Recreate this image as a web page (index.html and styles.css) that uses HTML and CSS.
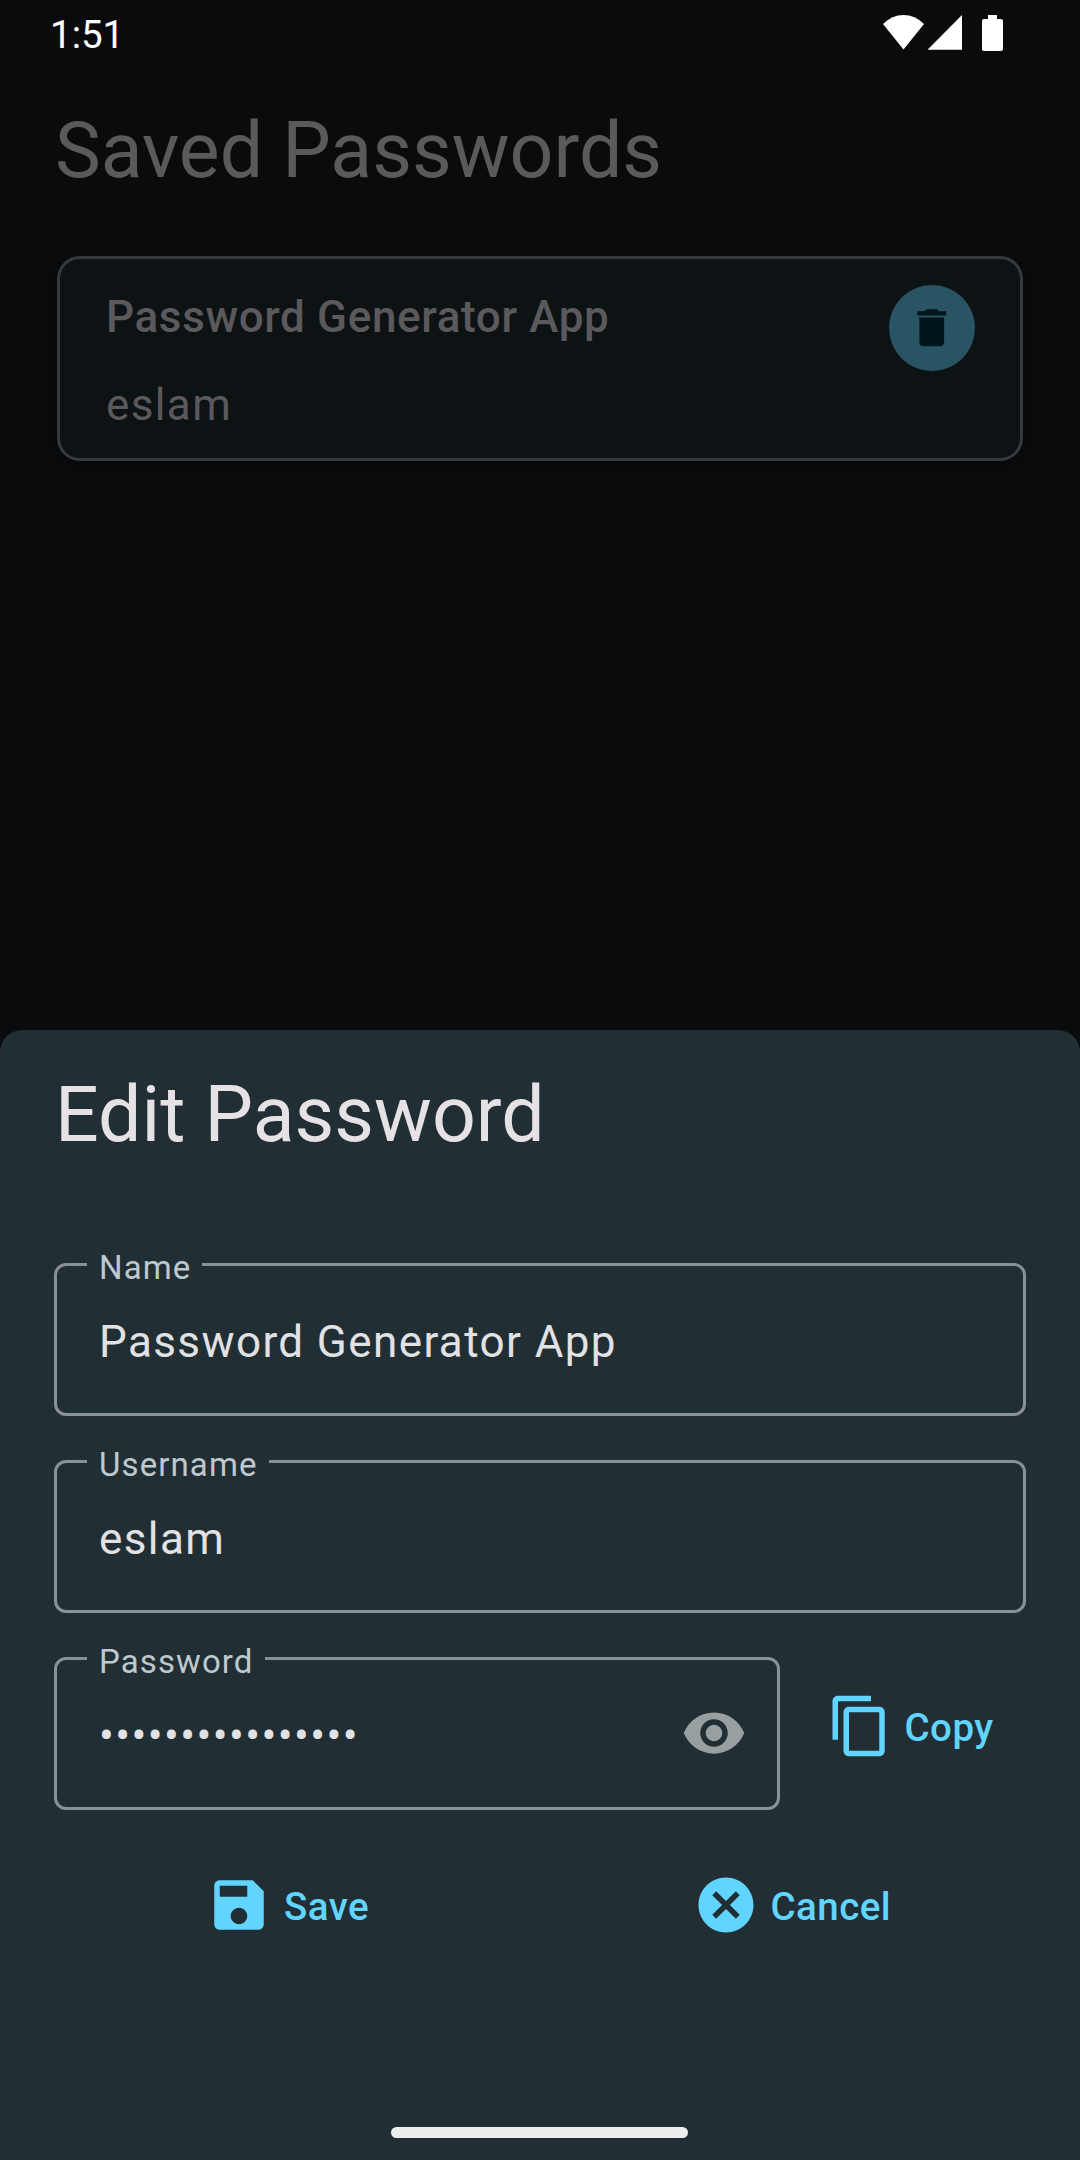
FILE: index.html
```html
<!DOCTYPE html>
<html lang="en">
<head>
<meta charset="utf-8">
<title>Saved Passwords</title>
<link rel="stylesheet" href="styles.css">
</head>
<body>
<div class="screen">
  <header class="status">
    <span class="time">1:51</span>
    <svg class="status-icons" width="122" height="38" viewBox="0 0 122 38" fill="currentColor">
      <path d="M1 10Q10 1 21.500 1T42 10L21.500 35.500Z"/>
      <path d="M45.500 35.800L80 1V35.800Z"/>
      <path d="M106 1h9v4h4q2 0 2 2v28q0 2-2 2h-17q-2 0-2-2V7q0-2 2-2h4z"/>
    </svg>
  </header>
  <main class="saved">
    <h1 class="heading">Saved Passwords</h1>
    <article class="card">
      <div class="card-text">
        <h2 class="card-name">Password Generator App</h2>
        <p class="card-user">eslam</p>
      </div>
      <button class="delete" aria-label="Delete">
        <svg width="49.5" height="49.5" viewBox="0 0 24 24" fill="currentColor"><path d="M6 19c0 1.100.9 2 2 2h8c1.100 0 2-.9 2-2V7H6v12zM19 4h-3.500l-1-1h-5l-1 1H5v2h14V4z"/></svg>
      </button>
    </article>
  </main>
  <section class="sheet">
    <h1 class="heading">Edit Password</h1>
    <div class="fields">
      <div class="field"><span class="label">Name</span><span class="value">Password Generator App</span></div>
      <div class="field"><span class="label">Username</span><span class="value">eslam</span></div>
      <div class="password-row">
        <div class="field"><span class="label">Password</span><span class="value">••••••••••••••••</span>
          <svg class="eye" width="66" height="66" viewBox="0 0 24 24" fill="currentColor"><path d="M12 4.500C7 4.500 2.730 7.610 1 12c1.730 4.390 6 7.500 11 7.500s9.270-3.110 11-7.500c-1.730-4.390-6-7.500-11-7.500zM12 17c-2.760 0-5-2.240-5-5s2.240-5 5-5 5 2.240 5 5-2.240 5-5 5zm0-8c-1.660 0-3 1.340-3 3s1.340 3 3 3 3-1.340 3-3-1.340-3-3-3z"/></svg>
        </div>
        <button class="action copy">
          <svg width="66" height="66" viewBox="0 0 24 24" fill="currentColor"><path d="M16 1H4c-1.100 0-2 .9-2 2v14h2V3h12V1zm3 4H8c-1.100 0-2 .9-2 2v14c0 1.100.9 2 2 2h11c1.100 0 2-.9 2-2V7c0-1.100-.9-2-2-2zm0 16H8V7h11v14z"/></svg>
          <span>Copy</span>
        </button>
      </div>
    </div>
    <div class="actions">
      <button class="action">
        <svg width="66" height="66" viewBox="0 0 24 24" fill="currentColor"><path d="M17 3H5c-1.110 0-2 .9-2 2v14c0 1.100.89 2 2 2h14c1.100 0 2-.9 2-2V7l-4-4zm-5 16c-1.660 0-3-1.340-3-3s1.340-3 3-3 3 1.340 3 3-1.340 3-3 3zm3-10H5V5h10v4z"/></svg>
        <span>Save</span>
      </button>
      <button class="action">
        <svg width="66" height="66" viewBox="0 0 24 24" fill="currentColor"><path d="M12 2C6.470 2 2 6.470 2 12s4.470 10 10 10 10-4.470 10-10S17.530 2 12 2zm5 13.590L15.590 17 12 13.410 8.410 17 7 15.590 10.590 12 7 8.410 8.410 7 12 10.590 15.590 7 17 8.410 13.410 12 17 15.590z"/></svg>
        <span>Cancel</span>
      </button>
    </div>
    <div class="nav-handle"></div>
  </section>
</div>
</body>
</html>
```
FILE: styles.css
```css
* { box-sizing: border-box; margin: 0; padding: 0; }
body { background: #0a0b0d; font-family: Roboto, "Liberation Sans", sans-serif; }
button { border: 0; background: none; font: inherit; }
svg { display: block; flex: none; }

.screen {
  width: 1080px;
  height: 2160px;
  display: flex;
  flex-direction: column;
  overflow: hidden;
  background: #0a0b0d;
}

.status {
  height: 102px;
  padding: 14px 76px 0 50px;
  display: flex;
  justify-content: space-between;
  align-items: flex-start;
  color: #fff;
}
.time { font-size: 38.500px; line-height: 42px; }

.saved { flex: 1; padding: 0 57px 0 54px; color: #5c595c; }
.heading { padding-left: 1px; font-size: 77px; line-height: 99px; font-weight: 400; }

.card {
  height: 205px;
  margin: 55px 0 0 3px;
  padding: 25px 45px 0 46px;
  display: flex;
  justify-content: space-between;
  align-items: flex-start;
  border: 3px solid #363a3d;
  border-radius: 23px;
  background: #0d1315;
  box-shadow: 0 3px 8px rgba(0, 0, 0, .3);
}
.card-text { display: flex; flex-direction: column; gap: 22px; }
.card-name { font-size: 44px; line-height: 66px; font-weight: 500; letter-spacing: .64px; }
.card-user { font-size: 44px; line-height: 66px; letter-spacing: 1.375px; }
.delete {
  width: 86px;
  height: 86px;
  margin-top: 1px;
  display: flex;
  align-items: center;
  justify-content: center;
  border-radius: 50%;
  background: #285463;
  color: #01161c;
}

.sheet {
  height: 1130px;
  padding: 36px 54px 22px;
  display: flex;
  flex-direction: column;
  border-radius: 22px 22px 0 0;
  background: #212f35;
  color: #e6e1e5;
}
.fields { margin-top: 98px; display: flex; flex-direction: column; gap: 44px; }
.field {
  position: relative;
  height: 153px;
  padding: 43px 30px 0 42px;
  display: flex;
  justify-content: space-between;
  align-items: flex-start;
  border: 3px solid #8a9194;
  border-radius: 12px;
}
.label {
  position: absolute;
  left: 30px;
  top: -20px;
  padding: 0 11px 0 12px;
  background: #212f35;
  color: #bfc8cd;
  font-size: 33px;
  line-height: 44px;
  letter-spacing: 1.1px;
}
.value { color: #e2e2e4; font-size: 44px; line-height: 66px; letter-spacing: 1.400px; }
.password-row { display: flex; align-items: flex-start; }
.password-row .field { width: 726px; }
.eye { margin-top: -3px; color: #989fa0; }

.action {
  display: flex;
  align-items: center;
  gap: 12px;
  color: #61d4ff;
  font-size: 38.500px;
  line-height: 66px;
  font-weight: 500;
  letter-spacing: .450px;
}
.action span { height: 66px; padding-top: 2px; }
.copy { margin: 36px 0 0 46.500px; }
.actions {
  margin-top: 62px;
  padding-left: 152px;
  display: grid;
  grid-template-columns: 486.500px 1fr;
}
.nav-handle {
  width: 297px;
  height: 11px;
  margin: auto auto 0 337px;
  border-radius: 6px;
  background: #eceeee;
}
```
